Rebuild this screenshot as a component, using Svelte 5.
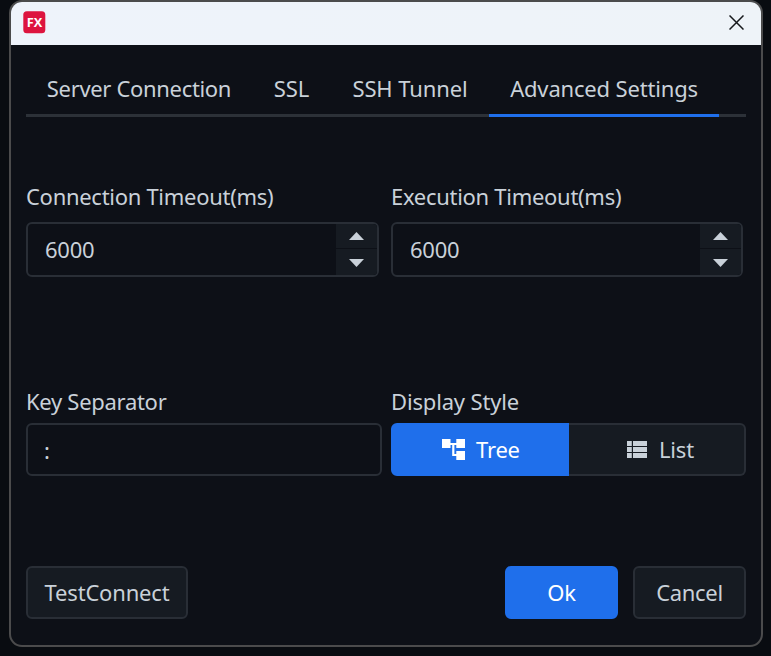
<script>
  const tabs = [
    { label: 'Server Connection', id: 'server' },
    { label: 'SSL', id: 'ssl' },
    { label: 'SSH Tunnel', id: 'ssh' },
    { label: 'Advanced Settings', id: 'advanced' }
  ];
  let active = $state('advanced');
  let style = $state('tree');
  let timeouts = $state([
    { label: 'Connection Timeout(ms)', value: 6000 },
    { label: 'Execution Timeout(ms)', value: 6000 }
  ]);
</script>

<div class="desktop">
  <div class="window">
    <header>
      <svg class="logo" width="23" height="23" viewBox="0 0 23 23">
        <rect x="0.3" y="0.3" width="22" height="22" rx="3.5" fill="#dd143f" />
        <text x="11.5" y="15.8" text-anchor="middle" textLength="15.5" lengthAdjust="spacingAndGlyphs">FX</text>
      </svg>
      <svg class="close" width="15" height="15" viewBox="0 0 15 15">
        <path d="M.5.5 14.5 14.5M14.5.5.5 14.5" stroke="#17191c" stroke-width="1.5" fill="none" />
      </svg>
    </header>

    <main>
      <nav>
        {#each tabs as tab}
          <button class="tab {tab.id}" class:active={active === tab.id} onclick={() => (active = tab.id)}>{tab.label}</button>
        {/each}
      </nav>

      <section class="timeouts">
        {#each timeouts as field, i}
          <div class="field" class:second={i === 1}>
            <div class="label">{field.label}</div>
            <div class="number">
              <span class="value">{field.value}</span>
              <div class="spin">
                <button aria-label="Increase" onclick={() => field.value++}>
                  <svg width="15" height="8" viewBox="0 0 15 8"><path d="M7.5 0 15 8H0z" fill="#c9d1d9" /></svg>
                </button>
                <button aria-label="Decrease" onclick={() => field.value--}>
                  <svg width="15" height="8" viewBox="0 0 15 8"><path d="M0 0h15L7.5 8z" fill="#c9d1d9" /></svg>
                </button>
              </div>
            </div>
          </div>
        {/each}
      </section>

      <section class="keys">
        <div class="separator">
          <div class="label key">Key Separator</div>
          <div class="input">:</div>
        </div>
        <div class="display">
          <div class="label disp">Display Style</div>
          <div class="segments">
            <button class="tree" class:chosen={style === 'tree'} onclick={() => (style = 'tree')}>
              <svg width="23" height="21" viewBox="0 0 23 21" fill="currentColor">
                <path d="M0 0h8.5v9H0zM14.3 0H23v9h-8.7zM14.3 12H23v9h-8.7zM8 4h6.5v2H8zM10.2 5h2.2v10h2.1v2h-4.3z" />
              </svg>
              <span>Tree</span>
            </button>
            <button class="list" class:chosen={style === 'list'} onclick={() => (style = 'list')}>
              <svg width="20" height="17" viewBox="0 0 20 17" fill="currentColor">
                <path d="M0 0h4.8v5H0zM6 0h14v5H6zM0 6h4.8v5H0zM6 6h14v5H6zM0 12h4.8v5H0zM6 12h14v5H6z" />
              </svg>
              <span>List</span>
            </button>
          </div>
        </div>
      </section>

      <footer>
        <button class="action test">TestConnect</button>
        <button class="action ok">Ok</button>
        <button class="action cancel">Cancel</button>
      </footer>
    </main>
  </div>
</div>

<style>
  :global(body) { background: #090c11; }
  * { box-sizing: border-box; }
  .desktop {
    width: 771px;
    height: 656px;
    padding: 0 8px 9px 9px;
    background: #090c11;
    overflow: hidden;
    color: #c9d1d9;
    font-family: "Noto Sans", "Open Sans", sans-serif;
    font-size: 22px;
    line-height: 30px;
  }
  button {
    margin: 0;
    padding: 0;
    border: 0;
    background: none;
    color: inherit;
    font: inherit;
    letter-spacing: inherit;
    white-space: nowrap;
  }
  svg { display: block; flex: none; }
  .window {
    width: 754px;
    height: 647px;
    border: 2px solid #4b4b4c;
    border-radius: 13px;
    overflow: hidden;
    background: #0d1017;
  }
  header {
    display: flex;
    justify-content: space-between;
    height: 43px;
    padding: 9px 17px 0 12px;
    background: linear-gradient(90deg, #eef3fb, #eef3f8);
  }
  .logo text {
    font: bold 12.2px "Open Sans", sans-serif;
    fill: #fff;
  }
  .close { margin-top: 4px; }
  main { padding: 0 15px; }
  nav {
    display: flex;
    height: 72px;
    padding-top: 19px;
    border-bottom: 3px solid #2c3138;
  }
  .tab {
    height: 53px;
    padding-bottom: 2px;
    border-bottom: 3px solid transparent;
    text-align: center;
  }
  .tab.active { border-color: #1f6feb; }
  .server { width: 226px; letter-spacing: -0.33px; }
  .ssl { width: 79px; }
  .ssh { width: 158px; letter-spacing: -0.1px; }
  .advanced { width: 230px; letter-spacing: -0.17px; }
  .timeouts { display: flex; gap: 12px; padding-top: 64px; }
  .field { width: 353px; }
  .field.second { width: 352px; }
  .label { height: 41px; white-space: nowrap; letter-spacing: -0.29px; }
  .number {
    display: flex;
    justify-content: space-between;
    height: 55px;
    padding-left: 17px;
    border: 2px solid #292e36;
    border-radius: 6px;
    overflow: hidden;
  }
  .value { line-height: 50px; letter-spacing: -0.25px; }
  .spin { width: 41px; display: flex; flex-direction: column; gap: 1px; background: #0d1017; }
  .spin button { height: 24px; display: flex; justify-content: center; padding-top: 8px; background: #161b22; }
  .spin button:last-child { height: 26px; padding-top: 10px; }
  .keys { display: flex; gap: 9px; padding-top: 109px; }
  .keys .label { height: 37px; }
  .keys .disp { letter-spacing: -0.16px; }
  .separator { width: 356px; }
  .input {
    height: 53px;
    padding-left: 16px;
    border: 2px solid #292e36;
    border-radius: 6px;
    line-height: 50px;
  }
  .display { width: 355px; }
  .segments { display: flex; }
  .segments button {
    display: flex;
    align-items: flex-start;
    width: 178px;
    height: 53px;
    border: 2px solid #292e36;
    background: #161b22;
  }
  .segments span { line-height: 48px; letter-spacing: -0.2px; }
  .segments button.tree { gap: 11px; padding-left: 49px; border-radius: 6px 0 0 6px; }
  .segments button.list { gap: 12px; width: 177px; padding-left: 58px; border-left: 0; border-radius: 0 6px 6px 0; }
  .segments button.chosen { border-color: #1f6feb; background: #1f6feb; color: #fff; }
  .tree svg { margin-top: 14px; }
  .list svg { margin-top: 16px; }
  footer { display: flex; padding-top: 90px; }
  .action {
    height: 53px;
    padding-bottom: 2px;
    border: 2px solid #292e36;
    border-radius: 6px;
    background: #161b22;
    letter-spacing: -0.18px;
  }
  .test { width: 162px; }
  .ok { width: 113px; margin-left: auto; border-color: #1f6feb; background: #1f6feb; color: #fff; }
  .cancel { width: 113px; margin-left: 15px; letter-spacing: -0.3px; }
</style>
